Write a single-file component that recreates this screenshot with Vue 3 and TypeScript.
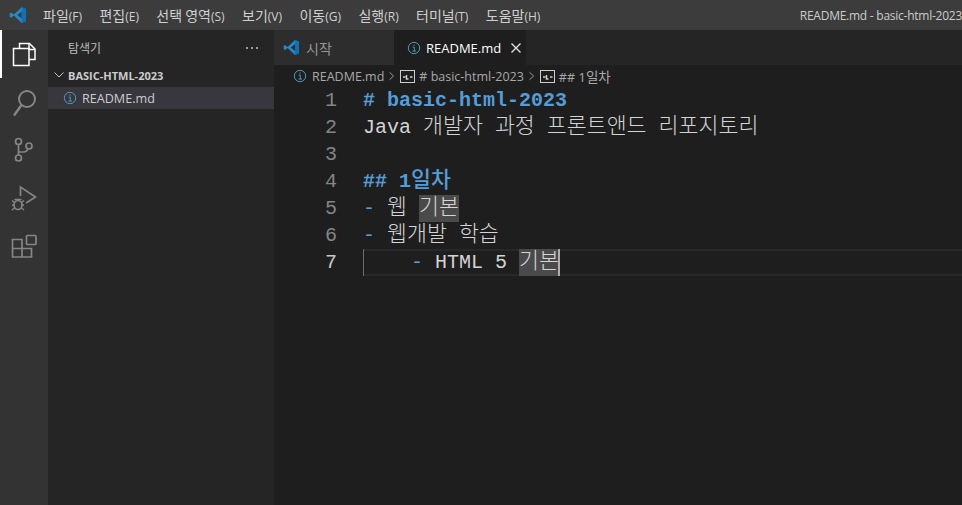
<script setup lang="ts">
interface Seg { t: string; c?: string }
interface Part { t: string; ko: boolean }
const menus: string[] = ['파일(F)', '편집(E)', '선택 영역(S)', '보기(V)', '이동(G)', '실행(R)', '터미널(T)', '도움말(H)']
const lines: Seg[][] = [
  [{ t: '# basic-html-2023', c: 'head' }],
  [{ t: 'Java ' }, { t: '개발자' }, { t: ' ' }, { t: '과정' }, { t: ' ' }, { t: '프론트앤드' }, { t: ' ' }, { t: '리포지토리' }],
  [],
  [{ t: '## 1일차', c: 'head' }],
  [{ t: '-', c: 'dash' }, { t: ' 웹 ' }, { t: '기본', c: 'sel' }],
  [{ t: '-', c: 'dash' }, { t: ' 웹개발 학습' }],
  [{ t: '    ' }, { t: '-', c: 'dash' }, { t: ' HTML 5 ' }, { t: '기본', c: 'sel' }],
]
function parts(text: string): Part[] {
  const found = text.match(/[\uac00-\ud7a3]+|[^\uac00-\ud7a3]+/g) ?? []
  return found.map((t) => ({ t, ko: /[\uac00-\ud7a3]/.test(t) }))
}
</script>

<template>
  <div class="window">
    <header class="titlebar">
      <svg class="logo" viewBox="0 0 24 24" width="18" height="18">
        <path fill="#2489ca" d="M17 1.500 22.500 4v16L17 22.500 6.500 12.600 2.800 15.500 1 14.500V9.500l1.800-1 3.700 2.900z" />
        <path fill="#3c3c3c" d="M17 7.200 11 12l6 4.800z" />
        <path fill="#1070b3" d="M17 1.500 22.500 4v16L17 22.500z" />
      </svg>
      <nav class="menus">
        <span v-for="m in menus" :key="m" class="menu"><span v-for="(p, k) in parts(m)" :key="k" :class="{ ko: p.ko }">{{ p.t }}</span></span>
      </nav>
      <span class="wintitle">README.md - basic-html-2023</span>
    </header>

    <div class="body">
      <aside class="activity">
        <div class="act on">
          <svg viewBox="0 0 48 48" width="48" height="48" fill="none" stroke="#fff" stroke-width="1.500">
            <path d="M19.500 18V13.500h10l5.500 5.500v10.500h-6" />
            <path d="M29 13.500V19.500h6" />
            <path d="M13.500 18.500h15.500v17h-15.500z" />
          </svg>
        </div>
        <div class="act">
          <svg viewBox="0 0 48 48" width="48" height="48" fill="none" stroke="#858585" stroke-width="2">
            <circle cx="27" cy="21" r="8" />
            <path d="M21.500 27 14 37.500" stroke-width="2.400" />
          </svg>
        </div>
        <div class="act">
          <svg viewBox="0 0 48 48" width="48" height="48" fill="none" stroke="#858585" stroke-width="1.700">
            <circle cx="18.500" cy="15.500" r="3" />
            <circle cx="18.500" cy="32" r="3" />
            <circle cx="29" cy="20" r="3" />
            <path d="M18.500 18.500V29M18.500 26h5q3.500 0 4.500-3.500" />
          </svg>
        </div>
        <div class="act">
          <svg viewBox="0 0 48 48" width="48" height="48" fill="none" stroke="#858585" stroke-width="1.700">
            <path d="M20.500 22V13l15 10-9.500 6" />
            <ellipse cx="18" cy="31" rx="4" ry="4.500" />
            <path d="M14.500 25.500h7M12 26.500l2.500 2M12 31h2M12 36l2.500-2M24 26.500l-2.500 2M24 31h-2M24 36l-2.500-2" stroke-width="1.400" />
          </svg>
        </div>
        <div class="act">
          <svg viewBox="0 0 48 48" width="48" height="48" fill="none" stroke="#858585" stroke-width="1.700">
            <path d="M12.500 17.500h9.500v17.500h-9.500zM12.500 26.500h19v8.500h-9.500" />
            <rect x="26.500" y="13.500" width="9.500" height="9" rx="1" />
          </svg>
        </div>
      </aside>

      <aside class="sidebar">
        <div class="side-title">
          <span class="ko-s">탐색기</span>
          <svg viewBox="0 0 16 16" width="16" height="16" fill="#c5c5c5">
            <circle cx="3" cy="8" r="1" /><circle cx="8" cy="8" r="1" /><circle cx="13" cy="8" r="1" />
          </svg>
        </div>
        <div class="folder">
          <svg viewBox="0 0 16 16" width="16" height="16" fill="none" stroke="#c5c5c5" stroke-width="1">
            <path d="M3.500 5.500 8 10l4.500-4.500" />
          </svg>
          <span>BASIC-HTML-2023</span>
        </div>
        <div class="file">
          <svg viewBox="0 0 16 16" width="14" height="14" fill="none" stroke="#519aba" stroke-width="1.100">
            <circle cx="8" cy="8" r="6.500" />
            <path d="M6.500 7h1.800v4.500M6.300 11.500h4M8 4v1.500" />
          </svg>
          <span>README.md</span>
        </div>
      </aside>

      <main class="editor">
        <div class="tabs">
          <div class="tab start">
            <svg viewBox="0 0 24 24" width="17" height="17">
              <path fill="#2489ca" d="M17 1.500 22.500 4v16L17 22.500 6.500 12.600 2.800 15.500 1 14.500V9.500l1.800-1 3.700 2.900z" />
              <path fill="#2d2d2d" d="M17 7.200 11 12l6 4.800z" />
              <path fill="#1070b3" d="M17 1.500 22.500 4v16L17 22.500z" />
            </svg>
            <span class="ko-t">시작</span>
          </div>
          <div class="tab active">
            <svg viewBox="0 0 16 16" width="14" height="14" fill="none" stroke="#519aba" stroke-width="1.100">
              <circle cx="8" cy="8" r="6.500" />
              <path d="M6.500 7h1.800v4.500M6.300 11.500h4M8 4v1.500" />
            </svg>
            <span>README.md</span>
            <svg class="close" viewBox="0 0 16 16" width="16" height="16" fill="none" stroke="#e6e6e6" stroke-width="1.300">
              <path d="M3.500 3.500l9 9M12.500 3.500l-9 9" />
            </svg>
          </div>
        </div>
        <div class="crumbs">
          <svg class="info" viewBox="0 0 16 16" width="14" height="14" fill="none" stroke="#519aba" stroke-width="1.100">
            <circle cx="8" cy="8" r="6.500" />
            <path d="M6.500 7h1.800v4.500M6.300 11.500h4M8 4v1.500" />
          </svg>
          <span class="crumb">README.md</span>
          <svg class="chev" viewBox="0 0 16 16" width="10" height="12" fill="none" stroke="#a0a0a0" stroke-width="1.500">
            <path d="M4 2 10.500 8 4 14" />
          </svg>
          <svg viewBox="0 0 15 13" width="15" height="13" fill="none" stroke="#cccccc" stroke-width="1">
            <rect x=".5" y=".5" width="14" height="12" />
            <path d="M3 7h2.500M6.500 5v4h2M10 7h2.500" stroke-width="1.500" />
          </svg>
          <span class="crumb">#&nbsp;basic-html-2023</span>
          <svg class="chev" viewBox="0 0 16 16" width="10" height="12" fill="none" stroke="#a0a0a0" stroke-width="1.500">
            <path d="M4 2 10.500 8 4 14" />
          </svg>
          <svg viewBox="0 0 15 13" width="15" height="13" fill="none" stroke="#cccccc" stroke-width="1">
            <rect x=".5" y=".5" width="14" height="12" />
            <path d="M3 7h2.500M6.500 5v4h2M10 7h2.500" stroke-width="1.500" />
          </svg>
          <span class="crumb">##&nbsp;<span class="ko-c">1일차</span></span>
        </div>
        <div class="code">
          <div v-for="(l, i) in lines" :key="i" class="line" :class="{ current: i === 6 }">
            <span class="num">{{ i + 1 }}</span>
            <span class="text"><span v-for="(s, j) in l" :key="j" :class="s.c"><span v-for="(p, k) in parts(s.t)" :key="k" :class="{ hangul: p.ko }">{{ p.t }}</span></span><span v-if="i === 6" class="cursor"></span></span>
          </div>
        </div>
      </main>
    </div>
  </div>
</template>

<style>
html, body { margin: 0; background: #1e1e1e; overflow: hidden; }
</style>

<style scoped>
.window {
  width: 962px;
  height: 505px;
  display: flex;
  flex-direction: column;
  overflow: hidden;
  font-family: "Open Sans", "Noto Sans CJK KR", sans-serif;
  color: #ccc;
}
.titlebar {
  height: 30px;
  flex: none;
  background: #3c3c3c;
  display: flex;
  align-items: center;
  font-size: 12px;
  padding-left: 9px;
}
.logo { flex: none; }
.menus { display: flex; gap: 17.400px; margin-left: 16px; }
.menu { white-space: nowrap; color: #d0d0d0; }
.ko { font-size: 14px; }
.wintitle {
  margin-left: auto;
  white-space: nowrap;
  color: #ccc;
  letter-spacing: -0.250px;
}
.body { flex: 1; display: flex; min-height: 0; }
.activity { width: 48px; flex: none; background: #333; }
.act { height: 48px; }
.act svg { display: block; }
.act.on { box-shadow: inset 2px 0 0 #fff; }
.sidebar { width: 226px; flex: none; background: #252526; font-size: 12px; }
.side-title {
  height: 35px;
  display: flex;
  align-items: center;
  justify-content: space-between;
  padding: 0 14px 0 20px;
  font-size: 11px;
  color: #bbb;
}
.ko-s { font-size: 12px; }
.folder {
  height: 22px;
  margin-top: -1px;
  display: flex;
  align-items: center;
  gap: 1px;
  padding-left: 3px;
  font-size: 11px;
  font-weight: 700;
  color: #ccc;
}
.file {
  height: 22px;
  margin-top: 1px;
  display: flex;
  align-items: center;
  gap: 5px;
  padding-left: 15px;
  background: #37373d;
  font-size: 12.600px;
  color: #ccc;
}
.editor { flex: 1; min-width: 0; background: #1e1e1e; display: flex; flex-direction: column; }
.tabs { height: 35px; flex: none; background: #252526; display: flex; }
.tab {
  height: 35px;
  display: flex;
  align-items: center;
  font-size: 13px;
  box-sizing: border-box;
}
.ko-t { font-size: 14px; }
.tab.start { width: 120px; background: #2d2d2d; padding-left: 9px; gap: 6px; color: #969696; }
.tab.active { width: 132px; background: #1e1e1e; padding-left: 13px; gap: 5px; color: #fff; }
.close { margin-left: 2px; }
.crumbs {
  height: 22px;
  flex: none;
  display: flex;
  align-items: center;
  padding-left: 19px;
  font-size: 12.500px;
  color: #a9a9a9;
  gap: 4px;
}
.info { margin-right: 1px; }
.ko-c { font-size: 13.500px; }
.chev { margin: 0 -1px; }
.code {
  font-family: "Liberation Mono", "Noto Sans CJK KR", monospace;
  font-size: 20px;
  color: #d4d4d4;
}
.hangul {
  font-family: "Noto Sans CJK KR", sans-serif;
  font-size: 21.700px;
  font-weight: 300;
  line-height: 0;
}
.line { height: 27px; line-height: 27px; display: flex; box-sizing: border-box; white-space: pre; }
.line.current { box-shadow: inset 0 2px 0 #282828, inset 0 -2px 0 #282828; margin-left: 90px; }
.line.current .num { margin-left: -90px; width: 62px; color: #c6c6c6; }
.num { width: 62px; flex: none; text-align: right; color: #858585; margin-right: 28px; transform: translateX(1px); }
.text { position: relative; margin-left: -1px; height: 27px; }
.current .text { box-shadow: inset 1px 0 0 #6a6a6a; }
.head { color: #569cd6; font-weight: 700; }
.head .hangul { font-weight: 500; }
.dash { color: #569cd6; }
.sel { background: #4a4a4a; display: inline-block; height: 27px; vertical-align: top; line-height: 27px; }
.cursor {
  display: inline-block;
  width: 2px;
  height: 27px;
  margin-left: -1px;
  background: #aeafad;
  vertical-align: top;
}
</style>
